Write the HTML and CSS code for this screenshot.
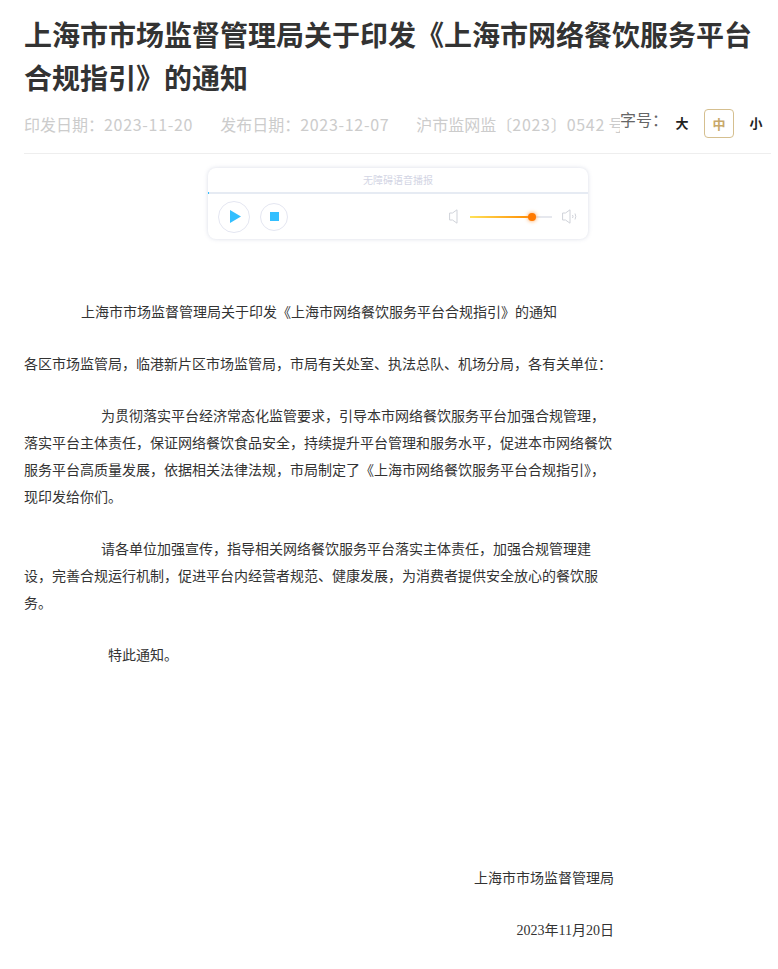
FILE: index.html
```html
<!DOCTYPE html>
<html lang="zh-CN">
<head>
<meta charset="utf-8">
<title>通知</title>
<link rel="stylesheet" href="styles.css">
</head>
<body>
<main class="page">
  <h1 class="title">上海市市场监督管理局关于印发《上海市网络餐饮服务平台合规指引》的通知</h1>
  <div class="meta">
    <div class="meta-left">
      <span>印发日期：<span class="num">2023-11-20</span></span>
      <span>发布日期：<span class="num">2023-12-07</span></span>
      <span>沪市监网监〔<span class="num">2023</span>〕<span class="num">0542</span> 号</span>
    </div>
    <div class="sizes">
      <span class="size-label">字号：</span>
      <span class="size">大</span>
      <span class="size active">中</span>
      <span class="size">小</span>
    </div>
  </div>
  <section class="player">
    <div class="player-head">无障碍语音播报</div>
    <div class="progress"></div>
    <div class="player-body">
      <div class="buttons">
        <span class="btn btn-play"><svg class="play-icon" width="11" height="13" viewBox="0 0 11 13"><path d="M0 0 L11 6.5 L0 13 Z" fill="#33bfff"/></svg></span>
        <span class="btn btn-stop"><span class="stop"></span></span>
      </div>
      <div class="volume">
        <svg width="9" height="15" viewBox="0 0 9 15" fill="none" stroke="#cfd2d9"><path d="M8 .8 V14.2 L3.5 11 H.6 V4 H3.5 Z"/></svg>
        <div class="track"><div class="track-fill"><span class="knob"></span></div></div>
        <svg width="15" height="15" viewBox="0 0 15 15" fill="none" stroke="#cfd2d9"><path d="M8 .8 V14.2 L3.5 11 H.6 V4 H3.5 Z"/><path d="M10.5 6 Q11.5 7.5 10.5 9"/><path d="M13 4.5 Q14.6 7.5 13 10.5"/></svg>
      </div>
    </div>
  </section>
  <article class="content">
    <p class="doc-title">上海市市场监督管理局关于印发《上海市网络餐饮服务平台合规指引》的通知</p>
    <p>各区市场监管局，临港新片区市场监管局，市局有关处室、执法总队、机场分局，各有关单位：</p>
    <p class="indent-a">为贯彻落实平台经济常态化监管要求，引导本市网络餐饮服务平台加强合规管理，落实平台主体责任，保证网络餐饮食品安全，持续提升平台管理和服务水平，促进本市网络餐饮服务平台高质量发展，依据相关法律法规，市局制定了《上海市网络餐饮服务平台合规指引》，现印发给你们。</p>
    <p class="indent-a">请各单位加强宣传，指导相关网络餐饮服务平台落实主体责任，加强合规管理建设，完善合规运行机制，促进平台内经营者规范、健康发展，为消费者提供安全放心的餐饮服务。</p>
    <p class="indent-b">特此通知。</p>
    <p class="sign">上海市市场监督管理局</p>
    <p class="date"><span class="narrow">2023</span>年<span class="narrow">11</span>月<span class="narrow">20</span>日</p>
  </article>
</main>
</body>
</html>
```
FILE: styles.css
```css
html, body { margin: 0; padding: 0; background: #fff; }
body { font-family: "Noto Sans CJK SC", "Liberation Sans", sans-serif; overflow: hidden; height: 969px; }
.page { padding: 0 7px 0 24px; }
.title { margin: 0; padding-top: 13px; font-size: 28px; line-height: 43px; font-weight: 700; color: #333; }
.meta { display: flex; height: 46px; margin-top: 8px; border-bottom: 1px solid #eee; }
.meta-left { width: 596px; flex: none; overflow: hidden; white-space: nowrap; font-size: 16px; line-height: 35px; color: #ccc; display: flex; gap: 27px; }
.num { letter-spacing: .7px; }
.sizes { display: flex; align-items: flex-start; font-size: 13px; color: #222; }
.size-label { flex: none; white-space: nowrap; font-size: 16px; line-height: 24px; color: #666; width: 47px; }
.size { flex: none; width: 30px; height: 29px; line-height: 27px; box-sizing: border-box; text-align: center; margin-top: 2px; font-weight: 700; margin-right: 7px; }
.size.active { color: #c8a86a; border: 1px solid #d5bf8f; border-radius: 4px; }
.player { width: 380px; height: 71px; margin: 14px 0 0 184px; background: #fff; border-radius: 8px; box-shadow: 0 0 4px rgba(120,130,170,.28); overflow: hidden; }
.player-head { height: 24px; line-height: 24px; text-align: center; font-size: 10px; color: #d3d5e4; }
.progress { height: 2px; background: linear-gradient(90deg, #33bfff 1px, #e6ebf3 1px); }
.player-body { height: 45px; display: flex; justify-content: space-between; align-items: center; padding: 0 11px 0 10px; }
.buttons { display: flex; align-items: center; gap: 10px; }
.btn { display: flex; align-items: center; justify-content: center; border: 1px solid #e4e6f1; border-radius: 50%; box-sizing: border-box; }
.btn-play { width: 32px; height: 32px; }
.play-icon { margin-left: 2px; }
.btn-stop { width: 28px; height: 28px; }
.stop { width: 9px; height: 9px; background: #33bfff; }
.volume { display: flex; align-items: center; }
.track { width: 82px; height: 2px; background: #e6e8ee; margin: 0 10px 0 12px; }
.track-fill { width: 62px; height: 2px; background: linear-gradient(90deg, #ffe258, #ff8a00); position: relative; }
.knob { position: absolute; right: -4px; top: -3px; width: 8px; height: 8px; border-radius: 50%; background: #ff7a00; box-shadow: 0 0 4px #ff9a40; }
.content { width: 590px; margin-top: 59px; font-size: 14px; line-height: 27px; color: #333; }
.content p { margin: 0 0 25px; }
.doc-title { padding-left: 57px; white-space: nowrap; }
.indent-a { text-indent: 77px; }
.indent-b { padding-left: 84px; }
.content .indent-b { margin-bottom: 196px; }
.sign, .date { text-align: right; }
.narrow { font-family: "Liberation Serif", serif; }
```
